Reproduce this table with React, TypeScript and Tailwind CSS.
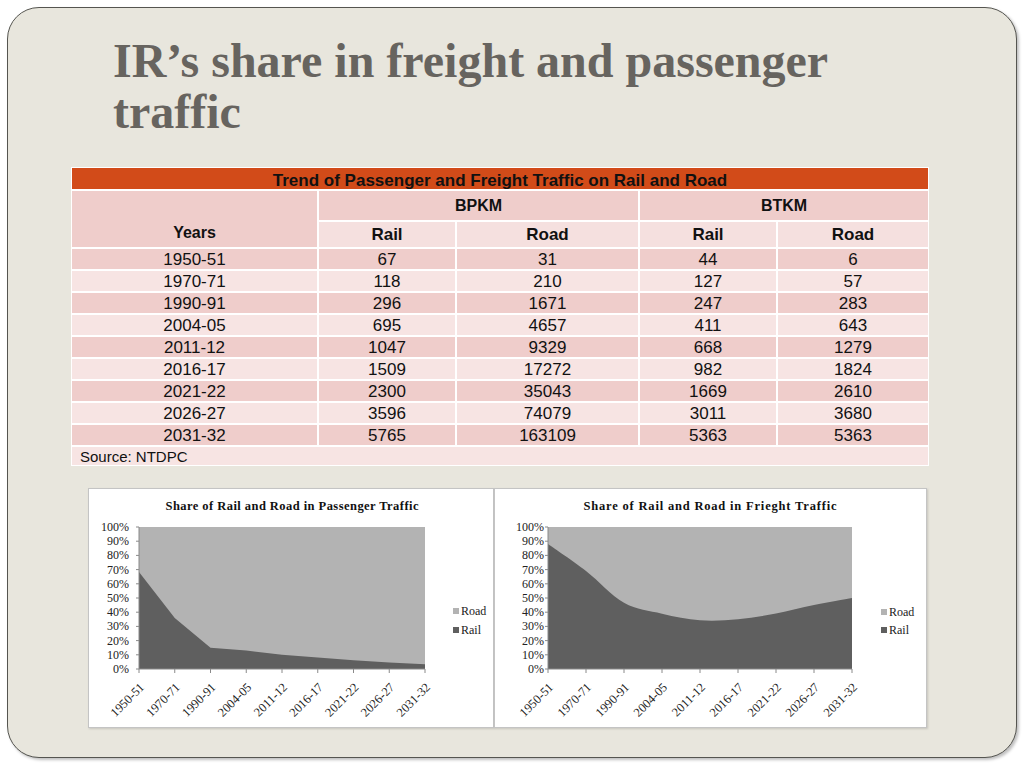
import React from "react";

type Pt = [number, number];

const rows: string[][] = [
  ["1950-51", "67", "31", "44", "6"],
  ["1970-71", "118", "210", "127", "57"],
  ["1990-91", "296", "1671", "247", "283"],
  ["2004-05", "695", "4657", "411", "643"],
  ["2011-12", "1047", "9329", "668", "1279"],
  ["2016-17", "1509", "17272", "982", "1824"],
  ["2021-22", "2300", "35043", "1669", "2610"],
  ["2026-27", "3596", "74079", "3011", "3680"],
  ["2031-32", "5765", "163109", "5363", "5363"],
];

function smooth(pts: Pt[]): string {
  let d = `M${pts[0][0]},${pts[0][1]}`;
  for (let i = 0; i < pts.length - 1; i++) {
    const p0 = pts[i - 1] || pts[i];
    const p1 = pts[i];
    const p2 = pts[i + 1];
    const p3 = pts[i + 2] || p2;
    const c1x = p1[0] + (p2[0] - p0[0]) / 6;
    const c1y = p1[1] + (p2[1] - p0[1]) / 6;
    const c2x = p2[0] - (p3[0] - p1[0]) / 6;
    const c2y = p2[1] - (p3[1] - p1[1]) / 6;
    d += ` C${c1x.toFixed(2)},${c1y.toFixed(2)} ${c2x.toFixed(2)},${c2y.toFixed(2)} ${p2[0].toFixed(2)},${p2[1].toFixed(2)}`;
  }
  return d;
}

function straight(pts: Pt[]): string {
  return pts.map((p, i) => `${i === 0 ? "M" : "L"}${p[0].toFixed(2)},${p[1].toFixed(2)}`).join(" ");
}

type ChartProps = {
  w: number;
  h: number;
  title: string;
  titleX: number;
  titleY: number;
  x0: number;
  x1: number;
  y0: number;
  y1: number;
  labelRight: number;
  legendX: number;
  legendY1: number;
  legendY2: number;
  rail: number[];
  curved: boolean;
};

function Chart(p: ChartProps) {
  const n = p.rail.length;
  const xs = p.rail.map((_, i) => p.x0 + (i * (p.x1 - p.x0)) / (n - 1));
  const pts: Pt[] = p.rail.map((v, i) => [xs[i], p.y1 - v * (p.y1 - p.y0)]);
  const area = (p.curved ? smooth(pts) : straight(pts)) + ` L${p.x1},${p.y1} L${p.x0},${p.y1} Z`;
  const years = rows.map((r) => r[0]);
  const levels = [0, 10, 20, 30, 40, 50, 60, 70, 80, 90, 100];
  const font = "'Liberation Serif', 'Times New Roman', serif";
  return (
    <svg width={p.w} height={p.h} viewBox={`0 0 ${p.w} ${p.h}`} className="block">
      <text
        x={p.titleX}
        y={p.titleY}
        textAnchor="middle"
        fontFamily={font}
        fontWeight="bold"
        fontSize="12.5"
        fill="#111"
        textLength={253}
        lengthAdjust="spacing"
      >
        {p.title}
      </text>
      <rect x={p.x0} y={p.y0} width={p.x1 - p.x0} height={p.y1 - p.y0} fill="#b3b3b3" />
      <path d={area} fill="#5f5f5f" />
      <line x1={p.x0} y1={p.y0} x2={p.x0} y2={p.y1} stroke="#8a8a8a" strokeWidth="1" />
      <line x1={p.x0} y1={p.y1} x2={p.x1} y2={p.y1} stroke="#8a8a8a" strokeWidth="1" />
      {levels.map((l) => {
        const y = p.y1 - (l / 100) * (p.y1 - p.y0);
        return (
          <g key={l}>
            <line x1={p.x0 - 3} y1={y} x2={p.x0} y2={y} stroke="#8a8a8a" strokeWidth="1" />
            <text
              x={p.labelRight}
              y={y + 4}
              textAnchor="end"
              fontFamily={font}
              fontSize="12"
              fill="#222"
            >
              {l}%
            </text>
          </g>
        );
      })}
      {xs.map((x, i) => (
        <g key={i}>
          <line x1={x} y1={p.y1} x2={x} y2={p.y1 + 4} stroke="#8a8a8a" strokeWidth="1" />
          <text
            x={x + 6}
            y={p.y1 + 19}
            textAnchor="end"
            fontFamily={font}
            fontSize="12.5"
            fill="#222"
            transform={`rotate(-45 ${x + 6} ${p.y1 + 19})`}
          >
            {years[i]}
          </text>
        </g>
      ))}
      <rect x={p.legendX} y={p.legendY1 - 3} width={6} height={6} fill="#b3b3b3" />
      <text x={p.legendX + 8} y={p.legendY1 + 4} fontFamily={font} fontSize="12" fill="#222">
        Road
      </text>
      <rect x={p.legendX} y={p.legendY2 - 3} width={6} height={6} fill="#5f5f5f" />
      <text x={p.legendX + 8} y={p.legendY2 + 4} fontFamily={font} fontSize="12" fill="#222">
        Rail
      </text>
    </svg>
  );
}

export default function App() {
  const pass = rows.map((r) => Number(r[1]) / (Number(r[1]) + Number(r[2])));
  const frt = rows.map((r) => Number(r[3]) / (Number(r[3]) + Number(r[4])));
  const dark = "bg-[#efcdcb]";
  const light = "bg-[#f7e4e3]";
  return (
    <div className="w-[1024px] h-[768px] bg-white p-[7px] font-['Liberation_Sans',Arial,sans-serif]">
      <div className="w-[1010px] h-[751px] rounded-[32px] border border-[#555550] bg-[#e8e6dd] shadow-[2px_2px_3px_rgba(0,0,0,0.25)] overflow-hidden">
        <h1 className="ml-[105px] mt-[27px] w-[760px] font-['Liberation_Serif','Times_New_Roman',serif] font-bold text-[48px] leading-[51px] text-[#67645f]">
          IR’s share in freight and passenger traffic
        </h1>

        <div className="ml-[63px] mt-[30px] w-[858px] bg-white p-[1px] grid grid-cols-[245px_136px_181px_136px_150px] gap-[2px] text-[#111]">
          <div className="col-span-5 h-[21px] bg-[#d24b19] flex items-center justify-center font-bold text-[17px] leading-none pt-[3px]">
            Trend of Passenger and Freight Traffic on Rail and Road
          </div>
          <div className={`row-span-2 ${dark} flex items-end justify-center pb-[6px] font-bold text-[16px] leading-none`}>
            Years
          </div>
          <div className={`col-span-2 h-[29px] ${dark} flex items-center justify-center font-bold text-[16px] leading-none`}>
            BPKM
          </div>
          <div className={`col-span-2 h-[29px] ${dark} flex items-center justify-center font-bold text-[16px] leading-none`}>
            BTKM
          </div>
          {["Rail", "Road", "Rail", "Road"].map((t, i) => (
            <div
              key={i}
              className="h-[25px] bg-[#f5e0df] flex items-center justify-center font-bold text-[17px] leading-none"
            >
              {t}
            </div>
          ))}
          {rows.map((r, ri) =>
            r.map((c, ci) => (
              <div
                key={`${ri}-${ci}`}
                className={`h-[20px] ${ri % 2 === 0 ? dark : light} flex items-center justify-center text-[17px] leading-none`}
              >
                {c}
              </div>
            ))
          )}
          <div className={`col-span-5 h-[18px] ${light} flex items-center pl-[8px] text-[15px] leading-none`}>
            Source: NTDPC
          </div>
        </div>

        <div className="ml-[80px] mt-[22px] flex items-start">
          <div className="w-[406px] h-[240px] bg-white border border-[#c4c4c4] shadow-[1px_1px_2px_rgba(0,0,0,0.15)]">
            <Chart
              w={404}
              h={238}
              title="Share of Rail and Road in Passenger Traffic"
              titleX={203}
              titleY={21}
              x0={50}
              x1={336}
              y0={38}
              y1={180}
              labelRight={40}
              legendX={364}
              legendY1={122}
              legendY2={141}
              rail={pass}
              curved={false}
            />
          </div>
          <div className="w-[433px] h-[240px] bg-white border border-[#c4c4c4] shadow-[1px_1px_2px_rgba(0,0,0,0.15)]">
            <Chart
              w={431}
              h={238}
              title="Share of Rail and Road in Frieght Traffic"
              titleX={215}
              titleY={21}
              x0={53}
              x1={357}
              y0={38}
              y1={180}
              labelRight={49}
              legendX={386}
              legendY1={123}
              legendY2={141}
              rail={frt}
              curved={true}
            />
          </div>
        </div>
      </div>
    </div>
  );
}
